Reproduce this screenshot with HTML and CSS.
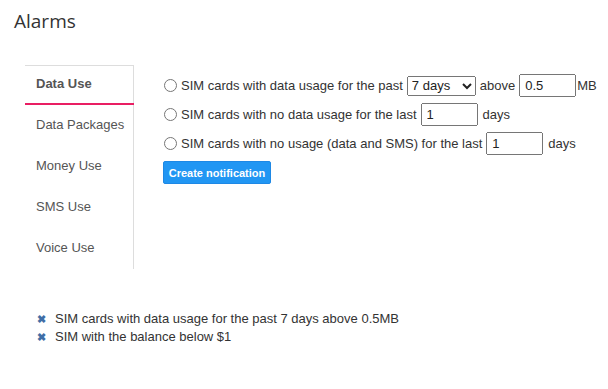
FILE: index.html
```html
<!DOCTYPE html>
<html>
<head>
<meta charset="utf-8">
<link rel="stylesheet" href="styles.css">
</head>
<body>
<h1 class="title">Alarms</h1>
<div class="panel">
  <ul class="tabs">
    <li class="tab active">Data Use</li>
    <li class="tab">Data Packages</li>
    <li class="tab">Money Use</li>
    <li class="tab">SMS Use</li>
    <li class="tab">Voice Use</li>
  </ul>
  <div class="content">
    <label class="row"><input type="radio" name="r" class="radio"> SIM cards with data usage for the past <select class="sel"><option>7 days</option></select> above <input type="text" class="num tight" value="0.5">MB</label>
    <label class="row"><input type="radio" name="r" class="radio"> SIM cards with no data usage for the last <input type="text" class="num" value="1"> days</label>
    <label class="row"><input type="radio" name="r" class="radio"> SIM cards with no usage (data and SMS) for the last <input type="text" class="num" value="1"> days</label>
    <button class="btn">Create notification</button>
  </div>
</div>
<ul class="list">
  <li class="item"><span class="x">✖</span>SIM cards with data usage for the past 7 days above 0.5MB</li>
  <li class="item"><span class="x">✖</span>SIM with the balance below $1</li>
</ul>
</body>
</html>
```
FILE: styles.css
```css
body {
  margin: 0;
  padding: 0;
  font-family: "Liberation Sans", Arial, sans-serif;
  font-size: 13px;
  color: #333;
  background: #fff;
}
.title {
  margin: 0;
  padding: 9px 0 0 14px;
  font-family: "Open Sans", sans-serif;
  font-weight: 400;
  font-size: 19px;
  line-height: 24px;
  color: #333;
}
.panel {
  display: flex;
  margin: 32px 0 0 25px;
}
.tabs {
  flex-shrink: 0;
  list-style: none;
  margin: 0;
  padding: 0;
  width: 108px;
  border-top: 1px solid #ddd;
  border-right: 1px solid #ddd;
}
.tab {
  height: 41px;
  line-height: 40px;
  padding-left: 11px;
  color: #555;
  box-sizing: border-box;
}
.tab.active {
  font-weight: bold;
  border-bottom: 2px solid #e91e63;
  margin-right: -1px;
  height: 39px;
  line-height: 36px;
}
.content {
  padding: 6px 0 0 29px;
}
.row {
  display: flex;
  align-items: center;
  height: 29px;
  white-space: nowrap;
  color: #333;
}
.radio {
  margin: 0 4px 0 1px;
  width: 13px;
  height: 13px;
}
.sel {
  font-family: "Liberation Sans", Arial, sans-serif;
  font-size: 13px;
  height: 20px;
  width: 69px;
  margin: 0 4px;
  padding: 0;
  color: #222;
}
.num {
  font-family: "Liberation Sans", Arial, sans-serif;
  font-size: 13px;
  width: 57px;
  height: 23px;
  box-sizing: border-box;
  margin: 0 5px 0 4px;
  padding: 1px 4px;
  color: #222;
}
.num.tight { margin-right: 1px; }
.btn {
  display: block;
  margin-top: 3px;
  background: #2196f3;
  color: #fff;
  border: 1px solid #1e88e5;
  border-radius: 2px;
  font-family: "Liberation Sans", Arial, sans-serif;
  font-size: 11px;
  font-weight: bold;
  height: 23px;
  width: 108px;
  padding: 0;
}
.list {
  list-style: none;
  margin: 41px 0 0 37px;
  padding: 0;
}
.item {
  line-height: 18px;
  color: #333;
}
.x {
  display: inline-block;
  width: 18px;
  color: #3f6ea6;
  font-size: 11px;
  font-weight: bold;
}
```
